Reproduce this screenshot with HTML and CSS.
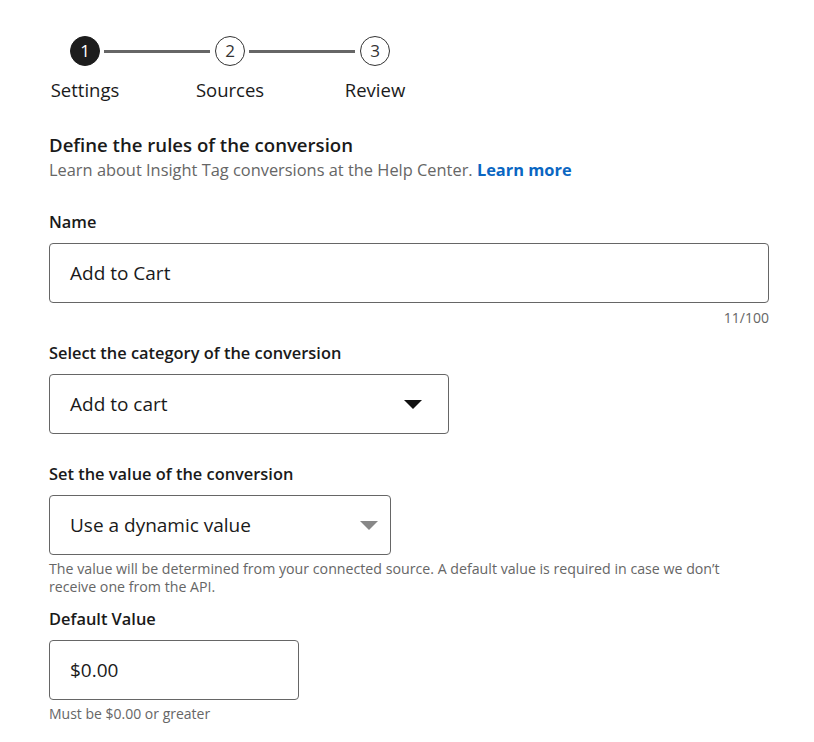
FILE: index.html
```html
<!DOCTYPE html>
<html lang="en">
<head>
<meta charset="utf-8">
<title>Conversion settings</title>
<link rel="stylesheet" href="styles.css">
</head>
<body>
<div class="page">
  <div class="stepper">
    <div class="step">
      <div class="dot dot-active">1</div>
      <div class="step-label">Settings</div>
    </div>
    <div class="connector"></div>
    <div class="step">
      <div class="dot">2</div>
      <div class="step-label">Sources</div>
    </div>
    <div class="connector"></div>
    <div class="step">
      <div class="dot">3</div>
      <div class="step-label">Review</div>
    </div>
  </div>

  <h2 class="title">Define the rules of the conversion</h2>
  <p class="subtitle">Learn about Insight Tag conversions at the Help Center. <a class="link" href="#">Learn more</a></p>

  <label class="field-label label-name">Name</label>
  <div class="box box-wide">Add to Cart</div>
  <div class="counter">11/100</div>

  <label class="field-label label-cat">Select the category of the conversion</label>
  <div class="box box-select box-cat">
    <span>Add to cart</span>
    <span class="caret caret-dark"></span>
  </div>

  <label class="field-label label-val">Set the value of the conversion</label>
  <div class="box box-select box-val">
    <span>Use a dynamic value</span>
    <span class="caret caret-muted"></span>
  </div>
  <p class="help">The value will be determined from your connected source. A default value is required in case we don’t receive one from the API.</p>

  <label class="field-label label-def">Default Value</label>
  <div class="box box-small">$0.00</div>
  <p class="hint">Must be $0.00 or greater</p>
</div>
</body>
</html>
```
FILE: styles.css
```css
* { box-sizing: border-box; }
html, body { margin: 0; padding: 0; background: #fff; }
body {
  font-family: "Open Sans", "Noto Sans", "Liberation Sans", sans-serif;
  color: #1a1a1a;
}
.page {
  padding: 36px 0 0 49px;
  width: 814px;
  display: flex;
  flex-direction: column;
  align-items: flex-start;
}
.stepper {
  display: flex;
  align-items: flex-start;
  margin-left: 21px;
}
.step {
  width: 30px;
  display: flex;
  flex-direction: column;
  align-items: center;
}
.dot {
  width: 30px;
  height: 30px;
  border-radius: 50%;
  border: 1px solid #333;
  color: #333;
  font-size: 17px;
  line-height: 28px;
  text-align: center;
}
.dot-active {
  background: #1d1d1d;
  border-color: #1d1d1d;
  color: #fff;
}
.step-label {
  white-space: nowrap;
  font-size: 18.5px;
  line-height: 26px;
  margin-top: 11px;
  color: #1a1a1a;
}
.connector {
  width: 106px;
  height: 3px;
  background: #666;
  margin: 14px 5px 0 4px;
}
.title {
  margin: 30px 0 0 0;
  font-size: 18.6px;
  font-weight: 600;
  line-height: 24px;
}
.subtitle {
  margin: 1px 0 0 0;
  font-size: 16.4px;
  line-height: 24px;
  color: #666;
}
.link {
  color: #0a66c2;
  font-weight: 700;
  text-decoration: none;
}
.field-label {
  display: block;
  font-size: 16.4px;
  font-weight: 600;
  line-height: 24px;
}
.label-name { margin-top: 28px; }
.box {
  margin-top: 9px;
  height: 60px;
  border: 1px solid #666;
  border-radius: 4px;
  padding: 0 20px;
  font-size: 19px;
  display: flex;
  align-items: center;
  color: #1a1a1a;
}
.box-wide { width: 720px; }
.box-select { justify-content: space-between; padding-right: 26px; }
.box-cat { width: 400px; }
.box-val { width: 342px; padding-right: 12px; }
.box-small { width: 250px; }
.counter {
  align-self: stretch;
  width: 720px;
  text-align: right;
  font-size: 14px;
  line-height: 18px;
  color: #666;
  margin-top: 6px;
}
.label-cat { margin-top: 14px; }
.label-val { margin-top: 28px; }
.label-def { margin-top: 11px; }
.caret {
  width: 0;
  height: 0;
  border-left: 9px solid transparent;
  border-right: 9px solid transparent;
}
.caret-dark { border-top: 9px solid #111; }
.caret-muted { border-top: 9px solid #888; }
.help {
  margin: 5px 0 0 0;
  width: 700px;
  font-size: 14.2px;
  line-height: 18px;
  color: #666;
}
.hint {
  margin: 5px 0 0 0;
  font-size: 14px;
  line-height: 18px;
  color: #666;
}
```
